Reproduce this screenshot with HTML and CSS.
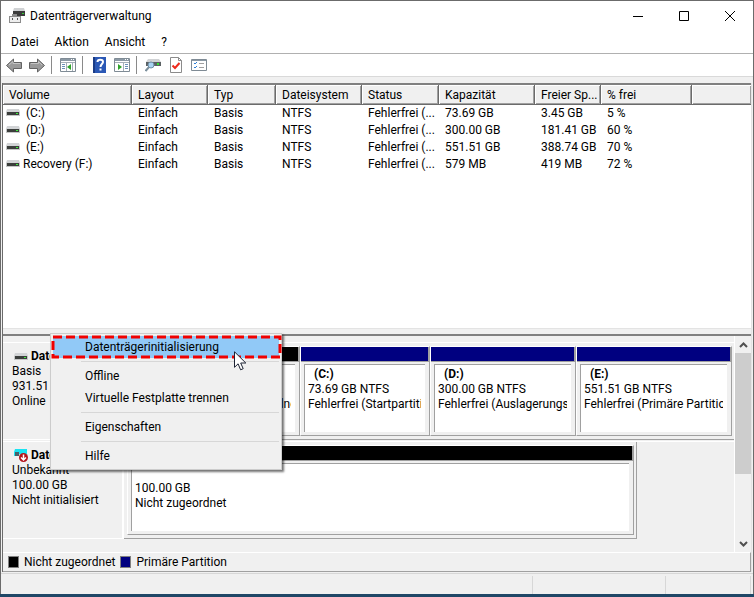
FILE: index.html
```html
<!DOCTYPE html>
<html lang="de">
<head>
  <meta charset="UTF-8">
  <title>Datenträgerverwaltung</title>
  <link rel="stylesheet" href="styles.css">
</head>
<body>
  <svg class="sprite" width="0" height="0" aria-hidden="true">
    <symbol id="drive" viewBox="0 0 14 8">
      <path d="M1 0h12l1 3H0z" fill="#d2d4d6"/>
      <path d="M0 3h14v4H0z" fill="#c4c6c6"/>
      <path d="M1 3h12v3H1z" fill="#3b3e3c"/>
      <path d="M10 4h2v1h-2z" fill="#3ef03e"/>
    </symbol>
  </svg>

  <div class="window">
    <header class="title-bar">
      <svg class="app-icon" width="16" height="16" viewBox="0 0 16 16">
        <path d="M5 0h10l1 3H4z" fill="#d0d2d4"/>
        <path d="M4 3h12v5H4z" fill="#3c3c3c"/>
        <path d="M13 5h2v1h-2z" fill="#35d035"/>
        <path d="M0 8h3V6h5v2h4v7H0z" fill="#8b8b8b"/>
        <path d="M1 9h10v5H1z" fill="#eeeeee"/>
        <path d="M3 10h1v2H3zM8 10h1v2H8z" fill="#555555"/>
      </svg>
      <h1>Datenträgerverwaltung</h1>
      <div class="caption-buttons">
        <button aria-label="Minimieren"><svg width="10" height="10"><path d="M0 5.5h10" stroke="#000"/></svg></button>
        <button aria-label="Maximieren"><svg width="10" height="10"><path d="M.5.5h9v9h-9z" fill="none" stroke="#000"/></svg></button>
        <button aria-label="Schließen"><svg width="10" height="10"><path d="M0 0l10 10M10 0L0 10" stroke="#000"/></svg></button>
      </div>
    </header>

    <nav class="menu-bar">
      <button>Datei</button>
      <button>Aktion</button>
      <button>Ansicht</button>
      <button>?</button>
    </nav>

    <div class="toolbar">
      <div class="history">
        <button aria-label="Zurück">
          <svg width="17" height="15" viewBox="0 0 17 15"><path d="M.5 7.5l7-6.500v3.500h8v6h-8v3.500z" fill="#9a9a9a" stroke="#636363"/><path d="M3 7l4-3.500v2h7" fill="none" stroke="#c4c4c4"/></svg>
        </button>
        <button aria-label="Vorwärts">
          <svg width="17" height="15" viewBox="0 0 17 15"><path d="M16.500 7.500l-7-6.500v3.500h-8v6h8v3.500z" fill="#9a9a9a" stroke="#636363"/><path d="M3 5.500h7.500v-2l3.500 3.500" fill="none" stroke="#c4c4c4"/></svg>
        </button>
      </div>
      <span class="divider"></span>
      <button aria-label="Konsolenstruktur">
        <svg width="16" height="14" viewBox="0 0 16 14"><path d="M.5.5h15v13H.5z" fill="#fff" stroke="#7f8b95"/><path d="M1 1h14v2H1z" fill="#8b99a5"/><path d="M11 1h1v1h-1zM13 1h1v1h-1z" fill="#fff"/><path d="M1 4.500h14M6.500 5v8M12.500 5v8" stroke="#a5afb8"/><path d="M2 6.500h3M2 8.500h3M2 10.500h3" stroke="#6a90b8"/><path d="M11 6v6L7 9z" fill="#2fa32b"/></svg>
      </button>
      <span class="divider"></span>
      <button aria-label="Hilfe">
        <svg width="13" height="16" viewBox="0 0 13 16"><path d="M0 0h13v16H0z" fill="#2b58b5"/><path d="M0 0h2v16H0z" fill="#1b3c86"/><path d="M4.500 5c0-3 5.500-3 5.500 0 0 2-2.500 2.200-2.500 5" fill="none" stroke="#fff" stroke-width="2"/><path d="M6.500 11.500h2v2h-2z" fill="#fff"/></svg>
      </button>
      <button aria-label="Aktionsbereich">
        <svg width="16" height="14" viewBox="0 0 16 14"><path d="M.5.5h15v13H.5z" fill="#fff" stroke="#7f8b95"/><path d="M1 1h14v2H1z" fill="#8b99a5"/><path d="M11 1h1v1h-1zM13 1h1v1h-1z" fill="#fff"/><path d="M1 4.500h14M9.500 5v8" stroke="#a5afb8"/><path d="M11 6.500h3M11 8.500h3M11 10.500h3" stroke="#6a90b8"/><path d="M4 6v6l4-3z" fill="#2fa32b"/></svg>
      </button>
      <span class="divider"></span>
      <button aria-label="Aktualisieren">
        <svg width="16" height="14" viewBox="0 0 16 14"><path d="M3 1h11l2 3H1z" fill="#d0d2d4"/><path d="M1 4h15v4H1z" fill="#5b6163"/><path d="M12 5h2v2h-2z" fill="#35e035"/><circle cx="6" cy="7" r="3" fill="#a9d3f2" stroke="#6f8da5"/><path d="M4 9l-3.500 4" stroke="#7b8f9c" stroke-width="2"/></svg>
      </button>
      <button aria-label="Prüfen">
        <svg width="12" height="16" viewBox="0 0 12 16"><path d="M.5.5h8l3 3v12H.5z" fill="#fff" stroke="#8b8b8b"/><path d="M8.500.500v3h3" fill="none" stroke="#8b8b8b"/><path d="M2.500 8.500l2.500 2.500 4.500-5" fill="none" stroke="#ee2a1c" stroke-width="2"/></svg>
      </button>
      <button aria-label="Einstellungen">
        <svg width="16" height="12" viewBox="0 0 16 12"><path d="M.5.5h15v11H.5z" fill="#fff" stroke="#7f8b95"/><path d="M1 1h14v1H1z" fill="#8b99a5"/><path d="M3 4l1 1 2-2M3 8l1 1 2-2" fill="none" stroke="#2d7fd6"/><path d="M8 4.500h5M8 8.500h5" stroke="#a0a0a0"/></svg>
      </button>
    </div>

    <main class="content">
      <section class="volume-list">
        <table>
          <colgroup>
            <col class="col-volume"><col class="col-layout"><col class="col-type"><col class="col-fs">
            <col class="col-status"><col class="col-capacity"><col class="col-free"><col class="col-percent"><col>
          </colgroup>
          <thead>
            <tr><th>Volume</th><th>Layout</th><th>Typ</th><th>Dateisystem</th><th>Status</th><th>Kapazität</th><th>Freier Sp...</th><th>% frei</th><th></th></tr>
          </thead>
          <tbody>
            <tr><td><svg class="drive" width="14" height="8"><use href="#drive"/></svg>&nbsp;(C:)</td><td>Einfach</td><td>Basis</td><td>NTFS</td><td>Fehlerfrei (...</td><td>73.69 GB</td><td>3.45 GB</td><td>5 %</td><td></td></tr>
            <tr><td><svg class="drive" width="14" height="8"><use href="#drive"/></svg>&nbsp;(D:)</td><td>Einfach</td><td>Basis</td><td>NTFS</td><td>Fehlerfrei (...</td><td>300.00 GB</td><td>181.41 GB</td><td>60 %</td><td></td></tr>
            <tr><td><svg class="drive" width="14" height="8"><use href="#drive"/></svg>&nbsp;(E:)</td><td>Einfach</td><td>Basis</td><td>NTFS</td><td>Fehlerfrei (...</td><td>551.51 GB</td><td>388.74 GB</td><td>70 %</td><td></td></tr>
            <tr><td><svg class="drive" width="14" height="8"><use href="#drive"/></svg>Recovery (F:)</td><td>Einfach</td><td>Basis</td><td>NTFS</td><td>Fehlerfrei (...</td><td>579 MB</td><td>419 MB</td><td>72 %</td><td></td></tr>
          </tbody>
        </table>
      </section>
      <div class="splitter"></div>

      <section class="disk-view">
        <div class="disks">
          <div class="disk">
            <div class="disk-label">
              <h2><svg class="drive" width="14" height="8"><use href="#drive"/></svg>Datenträger 0</h2>
              <p>Basis</p>
              <p>931.51 GB</p>
              <p>Online</p>
            </div>
            <div class="partitions">
              <div class="partition part-recovery"><div class="part-body"></div></div>
              <div class="partition part-free unallocated"><div class="part-body"><h3></h3><p></p><p>Nicht zugeordnet</p></div></div>
              <div class="partition part-c"><div class="part-body"><h3>(C:)</h3><p>73.69 GB NTFS</p><p>Fehlerfrei (Startpartition)</p></div></div>
              <div class="partition part-d"><div class="part-body"><h3>(D:)</h3><p>300.00 GB NTFS</p><p>Fehlerfrei (Auslagerungsdatei)</p></div></div>
              <div class="partition part-e"><div class="part-body"><h3>(E:)</h3><p>551.51 GB NTFS</p><p>Fehlerfrei (Primäre Partition)</p></div></div>
            </div>
          </div>
          <div class="disk">
            <div class="disk-label">
              <h2>
                <svg width="14" height="14" viewBox="0 0 14 14"><path d="M1 0h12v5H5v2H0V3z" fill="#19e3f2"/><path d="M1 3h4v4H1z" fill="#46606a"/><circle cx="9.500" cy="8.500" r="4.500" fill="#b3141b"/><path d="M9.500 5.500v5M7 8.500l2.500 2.500L12 8.500" fill="none" stroke="#fff" stroke-width="1.500"/></svg>Datenträger 1
              </h2>
              <p>Unbekannt</p>
              <p>100.00 GB</p>
              <p>Nicht initialisiert</p>
            </div>
            <div class="partitions framed">
              <div class="partition part-whole unallocated"><div class="part-body"><h3></h3><p>100.00 GB</p><p>Nicht zugeordnet</p></div></div>
            </div>
          </div>
        </div>
        <div class="scrollbar">
          <button aria-label="Nach oben"><svg width="9" height="6"><path d="M1 5l3.500-3.500L8 5" fill="none" stroke="#505050" stroke-width="2"/></svg></button>
          <div class="thumb"></div>
          <button aria-label="Nach unten"><svg width="9" height="6"><path d="M1 1l3.500 3.500L8 1" fill="none" stroke="#505050" stroke-width="2"/></svg></button>
        </div>
      </section>

      <div class="legend">
        <span class="swatch black"></span><span>Nicht zugeordnet</span>
        <span class="swatch navy"></span><span>Primäre Partition</span>
      </div>
    </main>

    <footer class="status-bar"><span></span><span></span><span></span></footer>

    <div class="context-menu">
      <button class="selected">Datenträgerinitialisierung</button>
      <hr>
      <button>Offline</button>
      <button>Virtuelle Festplatte trennen</button>
      <hr>
      <button>Eigenschaften</button>
      <hr>
      <button>Hilfe</button>
      <svg class="marker"><rect x="2" y="2" width="227" height="20" fill="none" stroke="#f00000" stroke-width="3" stroke-dasharray="9 4"/></svg>
      <svg class="cursor" width="13" height="20" viewBox="0 0 13 20"><path d="M.5.8v15.500l3.600-3.500 2.500 6 2.600-1.100-2.500-5.700h5.100z" fill="#fff" stroke="#1c2233"/></svg>
    </div>
  </div>
</body>
</html>
```
FILE: styles.css
```css
* {
  box-sizing: border-box;
}
body {
  margin: 0;
  font-family: Roboto, "Open Sans", sans-serif;
  font-size: 12px;
  line-height: 15px;
  color: #000;
  background-color: #1f4766;
}
h1, h2, h3, p {
  margin: 0;
  font-size: 12px;
}
button {
  font: inherit;
  color: inherit;
  border: none;
  background: none;
  padding: 0;
}
svg {
  display: block;
  flex: none;
}
.sprite {
  position: absolute;
}
.window {
  position: relative;
  display: flex;
  flex-direction: column;
  min-height: calc(100vh - 3px);
  border: 1px solid #6b6b6b;
  border-bottom: none;
  background-color: #f0f0f0;
}

/* title, menu, toolbar */
.title-bar {
  display: flex;
  align-items: center;
  height: 30px;
  padding-left: 8px;
  background-color: #fff;
}
.title-bar h1 {
  flex: 1;
  margin-left: 5px;
  font-weight: normal;
}
.caption-buttons {
  display: flex;
}
.caption-buttons button {
  display: flex;
  justify-content: center;
  align-items: center;
  width: 46px;
  height: 30px;
}
.menu-bar {
  display: flex;
  gap: 16px;
  height: 22px;
  padding-left: 10px;
  background-color: #fff;
}
.toolbar {
  display: flex;
  align-items: center;
  gap: 6px;
  height: 24px;
  padding-left: 5px;
  background-color: #fff;
  border-top: 1px solid #b0b0b0;
  border-bottom: 1px solid #d9d9d9;
}
.toolbar button {
  display: flex;
  justify-content: center;
  min-width: 16px;
}
.toolbar > button + button {
  margin-left: 1px;
}
.history {
  display: flex;
  gap: 5px;
}
.divider {
  width: 1px;
  height: 18px;
  margin-right: 2px;
  background-color: #8a8a8a;
}

/* volume table */
.content {
  flex: 1;
  display: flex;
  flex-direction: column;
  margin: 6px 1px 0;
  border-left: 1px solid #6b6b6b;
  border-right: 1px solid #e3e3e3;
}
.volume-list {
  flex: 1;
  background-color: #fff;
  border-top: 2px solid #808080;
}
table {
  width: 100%;
  table-layout: fixed;
  border-collapse: separate;
  border-spacing: 0;
}
.col-volume { width: 129px; }
.col-layout { width: 76px; }
.col-type { width: 68px; }
.col-fs { width: 86px; }
.col-status { width: 77px; }
.col-capacity { width: 96px; }
.col-free { width: 66px; }
.col-percent { width: 91px; }
th, td {
  height: 17px;
  padding: 0 0 0 6px;
  text-align: left;
  font-weight: normal;
  white-space: nowrap;
  overflow: hidden;
}
th {
  height: 20px;
  padding-top: 1px;
  background-color: #f0f0f0;
  border-right: 1px solid #6b6b6b;
  border-bottom: 1px solid #6b6b6b;
  box-shadow: inset 1px 1px #fff, inset -1px -1px #a0a0a0;
}
th:last-child {
  border-right: none;
}
td:first-child {
  padding-left: 3px;
}
td .drive {
  display: inline-block;
  margin-right: 3px;
}
.splitter {
  height: 8px;
  background-color: #f0f0f0;
  border-top: 1px solid #e3e3e3;
  border-bottom: 2px solid #808080;
}

/* graphical disk view */
.disk-view {
  display: flex;
}
.disks {
  flex: 1;
  min-width: 0;
  padding: 6px 0 13px;
}
.disk {
  display: flex;
  border-top: 1px solid #fff;
}
.disk + .disk {
  margin-top: 1px;
}
.disk-label {
  width: 121px;
  padding: 6px 0 0 9px;
  border-right: 2px solid #fff;
  border-bottom: 1px solid #fff;
  white-space: nowrap;
  overflow: hidden;
}
.disk-label h2 {
  display: flex;
  align-items: center;
  gap: 3px;
  height: 15px;
  padding-left: 2px;
}
.partitions {
  flex: 1;
  min-width: 0;
  display: flex;
  padding: 3px 0 3px 3px;
  border-bottom: 1px solid #a0a0a0;
}
.partitions.framed {
  flex: none;
  width: 513px;
  border-right: 1px solid #a0a0a0;
}
.partition {
  padding: 2px 4px 3px 3px;
  border: 1px solid #fff;
  border-right: 1px solid #a0a0a0;
  border-bottom: 1px solid #a0a0a0;
  overflow: hidden;
}
.partition::before {
  content: "";
  display: block;
  height: 14px;
  margin: -2px -4px 2px -3px;
  background-color: #000080;
  border-right: 1px solid #a0a0a0;
  border-bottom: 1px solid #a0a0a0;
}
.unallocated::before {
  background-color: #000;
}
.part-recovery { width: 74px; }
.part-free { width: 99px; }
.part-c { width: 130px; }
.part-d { width: 146px; }
.part-e { width: 156px; }
.part-whole { width: 507px; }
.part-body {
  height: 68px;
  padding: 2px 4px 0 3px;
  background-color: #fff;
  border-top: 1px solid #a0a0a0;
  border-left: 1px solid #a0a0a0;
}
.part-body h3 {
  height: 15px;
  padding-left: 6px;
}
.part-body p {
  min-height: 15px;
  white-space: nowrap;
  overflow: hidden;
}
.scrollbar {
  display: flex;
  flex-direction: column;
  width: 17px;
  border-left: 1px solid #fff;
}
.scrollbar button {
  display: flex;
  justify-content: center;
  align-items: center;
  height: 17px;
}
.thumb {
  height: 121px;
  margin-bottom: auto;
  background-color: #cdcdcd;
}

.legend {
  display: flex;
  align-items: center;
  gap: 5px;
  height: 20px;
  padding-left: 5px;
  border-top: 1px solid #fff;
  border-right: 1px solid #a0a0a0;
  border-bottom: 1px solid #a0a0a0;
}
.swatch {
  width: 11px;
  height: 12px;
  border: 1px solid #808080;
}
.black { background-color: #000; }
.navy { background-color: #000080; }

.status-bar {
  display: flex;
  height: 21px;
  margin-top: 1px;
  border-top: 1px solid #d7d7d7;
}
.status-bar span {
  width: 133px;
  margin-top: 2px;
  border-right: 1px solid #d7d7d7;
}
.status-bar span:first-child {
  flex: 1;
}
.status-bar span:last-child {
  width: 85px;
  margin-right: 2px;
}

/* popup over the disk view */
.context-menu {
  position: absolute;
  left: 49px;
  top: 332px;
  width: 232px;
  padding: 2px;
  background-color: #f0f0f0;
  border: 1px solid #ccc;
  box-shadow: 2px 2px 2px rgba(0, 0, 0, 0.55);
}
.context-menu button {
  display: block;
  width: 100%;
  height: 22px;
  padding-left: 32px;
  text-align: left;
}
.context-menu .selected {
  background-color: #91c9f7;
}
.context-menu hr {
  height: 1px;
  margin: 3px 0 3px 28px;
  border: none;
  background-color: #d7d7d7;
}
.marker {
  position: absolute;
  left: 0;
  top: 1px;
  width: 231px;
  height: 24px;
}
.cursor {
  position: absolute;
  left: 183px;
  top: 17px;
}
```
